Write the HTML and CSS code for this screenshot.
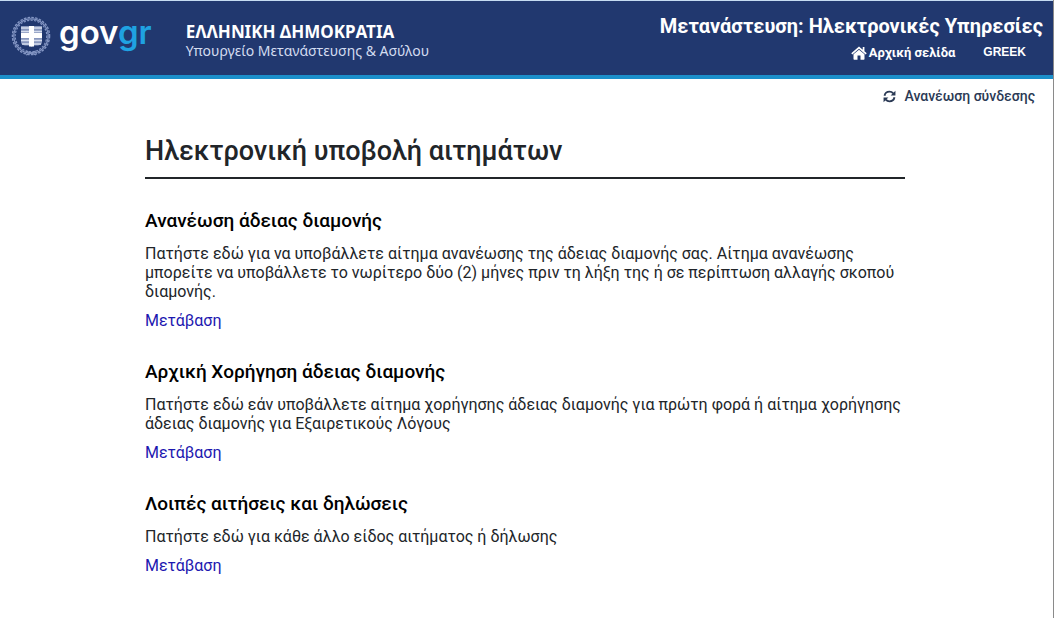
FILE: index.html
```
<!DOCTYPE html>
<html lang="el">
<head>
	<meta charset="utf-8">
	<meta name="viewport" content="width=device-width, initial-scale=1">
	<title>Μετανάστευση: Ηλεκτρονικές Υπηρεσίες</title>
	<link rel="stylesheet" href="styles.css">
</head>
<body>
	<!-- top banner -->
	<header class="banner">
		<div class="brand">
			<svg class="crest" viewBox="0 0 42 42" aria-hidden="true">
				<!-- laurel wreath -->
				<g fill="none" stroke="#8496c4">
					<circle cx="21" cy="21" r="18.6" stroke-width="1.4" stroke-dasharray="2.6 1.2"/>
					<circle cx="21" cy="21" r="17.2" stroke-width="1.2"/>
					<circle cx="21" cy="21" r="15.800" stroke-width="1.2" stroke-dasharray="2.200 1.3"/>
					<path d="M16 36l10 4M26 36l-10 4" stroke-width="1.2"/>
				</g>
				<!-- shield -->
				<path d="M11 11h21v16q0 3-4 3.500h-4.500L21.500 32 19.500 30.500H15q-4-.5-4-3.500z" fill="#8796bd"/>
				<path d="M11 13h8M24 13h8M11 16.500h8M24 16.500h8M11 25.500h8M24 25.500h8M12 29h7M24 29h7" stroke="#d5dded" stroke-width="1.500"/>
				<path d="M19 11h5v7h8v5h-8v8.500h-5V23h-8v-5h8z" fill="#fff"/>
			</svg>
			<span class="logo">gov<span class="logo-gr">gr</span></span>
			<div class="ministry">
				<div class="ministry-state">ΕΛΛΗΝΙΚΗ ΔΗΜΟΚΡΑΤΙΑ</div>
				<div class="ministry-name">Υπουργείο Μετανάστευσης &amp; Ασύλου</div>
			</div>
		</div>
		<div class="services">
			<div class="services-title">Μετανάστευση: Ηλεκτρονικές Υπηρεσίες</div>
			<nav class="menu">
				<a href="#" class="home">
					<svg class="home-icon" viewBox="0 0 16 14" aria-hidden="true">
						<path d="M8 3.700 13.500 8.300V13q0 .7-.7.7H9.500V9.500h-3v4.200H3.200q-.7 0-.7-.7V8.300z" fill="currentColor"/>
						<path d="M.8 7.800 8 1.700l7.200 6.100M12.600 1V5" fill="none" stroke="currentColor" stroke-width="1.700"/>
					</svg>Αρχική σελίδα</a>
				<a href="#" class="lang">GREEK</a>
			</nav>
		</div>
	</header>

	<!-- session refresh -->
	<div class="session">
		<a href="#" class="refresh">
			<svg class="refresh-icon" viewBox="0 0 512 512" aria-hidden="true">
				<path d="M60 225C80 125 165 65 256 65c60 0 110 25 145 67M452 287c-20 100-105 160-196 160-60 0-110-25-145-67" fill="none" stroke="currentColor" stroke-width="74"/>
				<path d="M490 30v190H300zM22 482V292h190z" fill="currentColor"/>
			</svg>
			Ανανέωση σύνδεσης
		</a>
	</div>

	<!-- list of applications -->
	<main class="content">
		<h1>Ηλεκτρονική υποβολή αιτημάτων</h1>

		<section class="request">
			<h2>Ανανέωση άδειας διαμονής</h2>
			<p>Πατήστε εδώ για να υποβάλλετε αίτημα ανανέωσης της άδειας διαμονής σας. Αίτημα ανανέωσης μπορείτε να υποβάλλετε το νωρίτερο δύο (2) μήνες πριν τη λήξη της ή σε περίπτωση αλλαγής σκοπού διαμονής.</p>
			<a href="#">Μετάβαση</a>
		</section>

		<section class="request">
			<h2>Αρχική Χορήγηση άδειας διαμονής</h2>
			<p>Πατήστε εδώ εάν υποβάλλετε αίτημα χορήγησης άδειας διαμονής για πρώτη φορά ή αίτημα χορήγησης άδειας διαμονής για Εξαιρετικούς Λόγους</p>
			<a href="#">Μετάβαση</a>
		</section>

		<section class="request">
			<h2>Λοιπές αιτήσεις και δηλώσεις</h2>
			<p>Πατήστε εδώ για κάθε άλλο είδος αιτήματος ή δήλωσης</p>
			<a href="#">Μετάβαση</a>
		</section>
	</main>
</body>
</html>
```

FILE: styles.css
```
* {
	box-sizing: border-box;
}

body {
	margin: 0;
	min-height: 100vh;
	border-right: 1px solid #8a8a8a;
	background-color: #fff;
	color: #212529;
	font-family: Roboto, "Liberation Sans", sans-serif;
	font-size: 16px;
	line-height: 19px;
}

a {
	text-decoration: none;
}

/* top banner */
.banner {
	display: flex;
	justify-content: space-between;
	align-items: flex-start;
	padding: 13px 10px 13px;
	border-top: 1px solid #c5dcf2;
	border-bottom: 4px solid #1b8fca;
	background-color: #21386f;
	color: #fff;
}

.brand {
	display: flex;
	align-items: flex-start;
}

.crest {
	width: 42px;
	height: 42px;
	margin-top: 1px;
}

.logo {
	margin-left: 7px;
	font-family: Inter, sans-serif;
	font-size: 33px;
	font-weight: 600;
	line-height: 36px;
}

.logo-gr {
	color: #1fa2e2;
}

.ministry {
	margin-left: 34px;
	padding-top: 8px;
	font-family: "Noto Sans", sans-serif;
}

.ministry-state {
	font-size: 17px;
	font-weight: bold;
	line-height: 19px;
}

.ministry-name {
	font-size: 14px;
	line-height: 19px;
	color: #d3dcf0;
}

.services {
	text-align: right;
}

.services-title {
	font-size: 20px;
	font-weight: bold;
	line-height: 24px;
}

.menu {
	display: flex;
	justify-content: flex-end;
	align-items: center;
	gap: 28px;
	padding-right: 17px;
	margin-top: 5px;
	font-size: 13px;
	font-weight: bold;
}

.menu a {
	color: #fff;
}

.home {
	display: flex;
	align-items: center;
	gap: 2px;
}

.home-icon {
	width: 16px;
	height: 14px;
}

.lang {
	font-family: "Liberation Sans", sans-serif;
	font-size: 12px;
}

/* session refresh */
.session {
	display: flex;
	justify-content: flex-end;
	padding: 8px 18px 0;
}

.refresh {
	display: flex;
	align-items: center;
	gap: 8px;
	color: #2b3a55;
	font-size: 14px;
	font-weight: 500;
}

.refresh-icon {
	width: 13px;
	height: 13px;
}

/* list of applications */
.content {
	max-width: 763px;
	margin: 27px auto 0;
	padding-right: 3px;
}

h1 {
	margin: 0 0 31px;
	padding-bottom: 8px;
	border-bottom: 2px solid #212529;
	font-size: 27px;
	font-weight: 500;
	line-height: 36px;
}

.request {
	margin-bottom: 31px;
}

.request h2 {
	margin: 0 0 12px;
	color: #000;
	font-size: 19px;
	font-weight: 500;
	line-height: 22px;
}

.request p {
	margin: 0 0 10px;
}

.request a {
	color: #1d18b0;
}
```
